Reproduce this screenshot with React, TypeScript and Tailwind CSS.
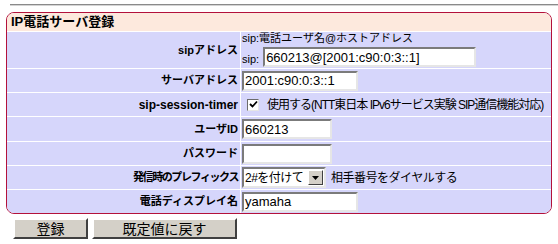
import React from "react";

const jp = "font-['Liberation_Sans','Noto_Sans_CJK_JP',sans-serif]";
const inset =
  "bg-white border-2 border-t-[#7b7b7b] border-l-[#7b7b7b] border-b-[#e6e6e6] border-r-[#e6e6e6]";

function Field({ w, value }: { w: string; value?: string }) {
  return (
    <div className={`${inset} ${w} h-[20px] flex items-center px-[1px] text-[13px] leading-none text-black whitespace-nowrap ${jp}`}>
      {value}
    </div>
  );
}

function Row({
  label,
  h,
  lc = "text-[11px]",
  children,
}: {
  label: string;
  h: string;
  lc?: string;
  children: React.ReactNode;
}) {
  return (
    <div className={`flex gap-px ${h}`}>
      <div className={`w-[233px] bg-[#d6d6fb] flex items-center justify-end pr-[2px] font-bold text-black whitespace-nowrap ${lc}`}>
        {label}
      </div>
      <div className="flex-1 bg-[#d6d6fb] flex items-center pl-[1px]">{children}</div>
    </div>
  );
}

export default function App() {
  return (
    <div className={`w-[558px] h-[244px] bg-white overflow-hidden ${jp}`}>
      <div className="ml-[10px] mt-[4px] h-[2px] border-t border-t-[#8a8a8a] border-b border-b-[#d4d4d4]" />
      <div className="ml-[6px] mt-[6px] w-[546px] h-[202px] border border-[#b3113b] rounded-[8px] overflow-hidden bg-white flex flex-col gap-px">
        <div className="h-[18px] bg-[#fde9dd] flex items-center pl-[4px] text-[13px] font-bold text-black">
          IP電話サーバ登録
        </div>
        <Row label="sipアドレス" h="h-[36px]">
          <div className="flex flex-col gap-[3px]">
            <div className="text-[11px] leading-none text-black whitespace-nowrap">sip:電話ユーザ名@ホストアドレス</div>
            <div className="flex items-end gap-[4px]">
              <span className="text-[11px] leading-none text-black pb-[2px]">sip:</span>
              <Field w="w-[213px]" value="660213@[2001:c90:0:3::1]" />
            </div>
          </div>
        </Row>
        <Row label="サーバアドレス" h="h-[23px]">
          <Field w="w-[116px]" value="2001:c90:0:3::1" />
        </Row>
        <Row label="sip-session-timer" h="h-[23px]" lc="text-[12px]">
          <div className="flex items-center pl-[5px] gap-[8px]">
            <div className="w-[12px] h-[12px] bg-white border border-t-[#6b6b6b] border-l-[#6b6b6b] border-b-[#e6e6e6] border-r-[#e6e6e6] flex items-center justify-center shrink-0">
              <svg width="9" height="9" viewBox="0 0 9 9">
                <path d="M1 4 L3.5 6.5 L8 1.5" stroke="#000" strokeWidth="1.8" fill="none" />
              </svg>
            </div>
            <span className="text-[12px] leading-none text-black tracking-[-1px] whitespace-nowrap">
              使用する(NTT東日本 IPv6サービス実験 SIP通信機能対応)
            </span>
          </div>
        </Row>
        <Row label="ユーザID" h="h-[24px]">
          <Field w="w-[90px]" value="660213" />
        </Row>
        <Row label="パスワード" h="h-[23px]">
          <Field w="w-[90px]" />
        </Row>
        <Row label="発信時のプレフィックス" h="h-[23px]" lc="text-[11px] tracking-[-1.4px]">
          <div className="flex items-center gap-[5px]">
            <div className={`${inset} w-[84px] h-[21px] flex items-center justify-between`}>
              <span className="text-[12px] leading-none pl-[1px] text-black whitespace-nowrap tracking-[-0.5px]">2#を付けて</span>
              <div className="w-[15px] h-[15px] mr-[1px] bg-[#d4d0c8] border border-t-white border-l-white border-b-[#404040] border-r-[#404040] flex items-center justify-center shrink-0">
                <svg width="7" height="4" viewBox="0 0 7 4">
                  <path d="M0 0 H7 L3.5 4 Z" fill="#000" />
                </svg>
              </div>
            </div>
            <span className="text-[12px] leading-none text-black tracking-[-0.5px] whitespace-nowrap">相手番号をダイヤルする</span>
          </div>
        </Row>
        <Row label="電話ディスプレイ名" h="h-[23px]">
          <Field w="w-[116px]" value="yamaha" />
        </Row>
      </div>
      <div className="flex gap-[4px] ml-[13px] mt-[4px]">
        <div className="w-[75px] h-[21px] bg-[#d4d0c8] border-2 border-t-white border-l-white border-b-[#404040] border-r-[#404040] flex items-center justify-center text-[14px] leading-none text-black">
          登録
        </div>
        <div className="w-[145px] h-[21px] bg-[#d4d0c8] border-2 border-t-white border-l-white border-b-[#404040] border-r-[#404040] flex items-center justify-center text-[14px] leading-none text-black">
          既定値に戻す
        </div>
      </div>
    </div>
  );
}
